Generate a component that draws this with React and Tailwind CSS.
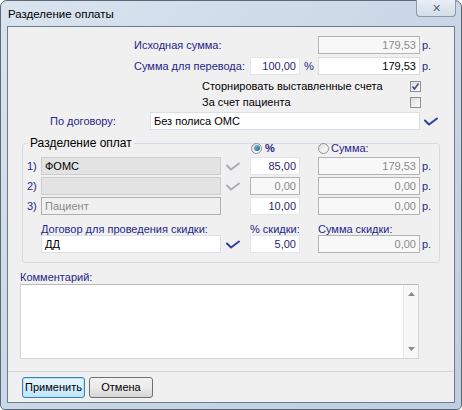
import React from 'react';

// Blue drop-down chevron next to combo fields
const Chevron = ({ active = true }) => (
  <svg width="14" height="9" viewBox="0 0 14 9" fill="none">
    <path
      d="M1 3.5 L5 7.5 L13 1.5"
      stroke={active ? '#2f3f9e' : '#a9adb5'}
      strokeWidth="2"
      strokeLinecap="round"
      strokeLinejoin="round"
    />
  </svg>
);

const Checkbox = ({ checked }) => (
  <div className="w-[11px] h-[11px] border border-[#8f8f8f] bg-gradient-to-br from-[#dcdcdc] to-[#fbfbfb] flex items-center justify-center">
    {checked && (
      <svg width="9" height="9" viewBox="0 0 9 9">
        <path d="M1.5 4.5 L3.5 7 L7.5 1.5" stroke="#3b4a7a" strokeWidth="1.4" fill="none" />
      </svg>
    )}
  </div>
);

const Radio = ({ checked }) => (
  <div className="w-[11px] h-[11px] rounded-full border border-[#8e9196] bg-gradient-to-br from-[#e0e0e0] to-[#fdfdfd] flex items-center justify-center">
    {checked && <div className="w-[6px] h-[6px] rounded-full bg-gradient-to-br from-[#7fc3ea] to-[#1a5f8e]" />}
  </div>
);

// Text field variants seen on the form
const Field = ({ w, kind = 'edit', align = 'right', children }) => {
  const styles = {
    edit: 'bg-white border-[#e2e6ea] text-[#1f1f6e]',
    editBlack: 'bg-white border-[#d9e0e8] text-black',
    ro: 'bg-[#f8f8f8] border-[#b4b4b4] text-[#8a8a8a]',
    roWhite: 'bg-white border-[#dcdcdc] text-black',
    grey: 'bg-[#e3e3e3] border-[#cdcdcd] text-black',
    greyLight: 'bg-[#f0f0f0] border-[#b0b0b0] text-[#8a8a8a]',
  };
  return (
    <div
      className={`${w} h-[18px] border flex items-center px-[3px] ${styles[kind]} ${
        align === 'right' ? 'justify-end' : 'justify-start'
      }`}
    >
      {children}
    </div>
  );
};

const Rub = () => <span className="ml-[2px] text-[#26268a]">р.</span>;

export default function App() {
  return (
    <div
      className="w-[462px] h-[410px] bg-gradient-to-br from-[#d9e4ef] via-[#c9d7e6] to-[#bfcfe0] border border-[#5c6978] rounded-t-[7px] rounded-b-[5px] flex flex-col text-[11px] leading-none text-black"
      style={{ fontFamily: '"Liberation Sans", Arial, sans-serif' }}
    >
      {/* Title bar */}
      <div className="h-[25px] flex items-start shrink-0">
        <div className="pl-[7px] pt-[8px] text-[11.5px] text-black">Разделение оплаты</div>
        <div className="ml-auto mr-[5px] -mt-px w-[40px] h-[17px] border border-[#8d99a6] border-t-0 rounded-b-[4px] bg-gradient-to-b from-[#e9eff5] to-[#d3dde8] flex items-center justify-center text-[#5a6470] text-[11px]">
          ✕
        </div>
      </div>

      {/* Client area */}
      <div className="mx-[6px] h-[377px] border border-[#6f7c8a] bg-[#f0f0f0] flex flex-col">
        <div className="h-[345px] border-b border-[#d6d6d6] flex flex-col shrink-0">
          {/* Исходная сумма */}
          <div className="mt-[9px] h-[18px] flex items-center pl-[126px]">
            <span className="w-[184px] text-[#26268a]">Исходная сумма:</span>
            <Field w="w-[102px]" kind="ro">179,53</Field>
            <Rub />
          </div>
          {/* Сумма для перевода */}
          <div className="mt-[3px] h-[18px] flex items-center pl-[126px]">
            <span className="w-[116px] text-[#26268a]">Сумма для перевода:</span>
            <Field w="w-[50px]">100,00</Field>
            <span className="w-[18px] pl-[4px] text-[#26268a]">%</span>
            <Field w="w-[102px]" kind="roWhite">179,53</Field>
            <Rub />
          </div>
          {/* Checkboxes */}
          <div className="mt-[6px] h-[11px] flex items-center pl-[194px]">
            <span className="w-[208px]">Сторнировать выставленные счета</span>
            <Checkbox checked />
          </div>
          <div className="mt-[5px] h-[11px] flex items-center pl-[194px]">
            <span className="w-[208px]">За счет пациента</span>
            <Checkbox />
          </div>
          {/* По договору */}
          <div className="mt-[4px] h-[18px] flex items-center pl-[42px]">
            <span className="w-[100px] text-[#26268a]">По договору:</span>
            <Field w="w-[270px]" kind="editBlack" align="left">Без полиса ОМС</Field>
            <span className="ml-[4px]">
              <Chevron />
            </span>
          </div>

          {/* Разделение оплат */}
          <div className="mt-[13px] ml-[14px] w-[418px] h-[120px] border border-[#d5dde3] rounded-[3px] relative flex flex-col shrink-0">
            <span className="absolute left-[5px] -top-[7px] px-[2px] bg-[#f0f0f0] text-[12px]">Разделение оплат</span>
            <div className="-mt-[2px] h-[12px] flex items-center pl-[228px]">
              <div className="w-[67px] flex items-center">
                <Radio checked />
                <span className="ml-[3px] text-[#26268a] font-bold">%</span>
              </div>
              <Radio />
              <span className="ml-[2px] text-[#26268a]">Сумма:</span>
            </div>

            {/* Row 1 */}
            <div className="mt-[3px] h-[18px] flex items-center pl-[4px]">
              <span className="w-[14px] text-[#26268a]">1)</span>
              <Field w="w-[180px]" kind="grey" align="left">ФОМС</Field>
              <span className="w-[29px] pl-[5px]">
                <Chevron active={false} />
              </span>
              <Field w="w-[50px]">85,00</Field>
              <span className="w-[18px]" />
              <Field w="w-[102px]" kind="ro">179,53</Field>
              <Rub />
            </div>
            {/* Row 2 */}
            <div className="mt-[2px] h-[18px] flex items-center pl-[4px]">
              <span className="w-[14px] text-[#26268a]">2)</span>
              <Field w="w-[180px]" kind="grey" align="left" />
              <span className="w-[29px] pl-[5px]">
                <Chevron active={false} />
              </span>
              <Field w="w-[50px]" kind="ro">0,00</Field>
              <span className="w-[18px]" />
              <Field w="w-[102px]" kind="ro">0,00</Field>
              <Rub />
            </div>
            {/* Row 3 */}
            <div className="mt-[2px] h-[18px] flex items-center pl-[4px]">
              <span className="w-[14px] text-[#26268a]">3)</span>
              <Field w="w-[180px]" kind="greyLight" align="left">Пациент</Field>
              <span className="w-[29px]" />
              <Field w="w-[50px]">10,00</Field>
              <span className="w-[18px]" />
              <Field w="w-[102px]" kind="ro">0,00</Field>
              <Rub />
            </div>
            {/* Discount labels */}
            <div className="mt-[8px] h-[12px] flex items-center pl-[18px] text-[#26268a]">
              <span className="w-[209px]">Договор для проведения скидки:</span>
              <span className="w-[68px]">% скидки:</span>
              <span>Сумма скидки:</span>
            </div>
            {/* Discount row */}
            <div className="h-[18px] flex items-center pl-[18px]">
              <Field w="w-[180px]" kind="editBlack" align="left">ДД</Field>
              <span className="w-[29px] pl-[5px]">
                <Chevron />
              </span>
              <Field w="w-[50px]">5,00</Field>
              <span className="w-[18px]" />
              <Field w="w-[102px]" kind="ro">0,00</Field>
              <Rub />
            </div>
          </div>

          {/* Комментарий */}
          <div className="mt-[8px] h-[13px] flex items-center pl-[12px] text-[#26268a]">Комментарий:</div>
          <div className="ml-[12px] w-[399px] h-[75px] bg-white border border-[#d4d4d4] border-t-[#b9b9b9] flex justify-end">
            <div className="w-[15px] h-full border-l border-[#e6e6e6] bg-[#f7f7f7] flex flex-col items-center justify-between py-[7px]">
              <svg width="7" height="4" viewBox="0 0 7 4">
                <path d="M0 4 L3.5 0 L7 4 Z" fill="#8a8a8a" />
              </svg>
              <svg width="7" height="4" viewBox="0 0 7 4">
                <path d="M0 0 L3.5 4 L7 0 Z" fill="#8a8a8a" />
              </svg>
            </div>
          </div>
        </div>

        {/* Buttons */}
        <div className="pt-[5px] pl-[14px] flex gap-[4px]">
          <button className="w-[63px] h-[21px] rounded-[3px] border border-[#3c7fb1] bg-gradient-to-b from-[#eaf6fd] to-[#bee6fd] text-[11px] text-black shadow-[inset_0_0_0_1px_#b9e4fb]">
            Применить
          </button>
          <button className="w-[64px] h-[21px] rounded-[3px] border border-[#707070] bg-gradient-to-b from-[#f2f2f2] via-[#ebebeb] to-[#d5d5d5] text-[11px] text-black">
            Отмена
          </button>
        </div>
      </div>
    </div>
  );
}
